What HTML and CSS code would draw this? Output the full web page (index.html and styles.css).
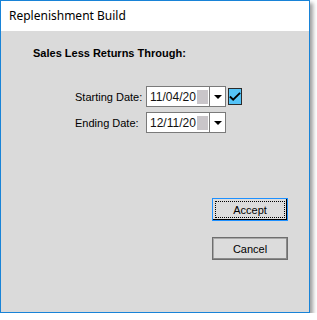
FILE: index.html
```html
<!DOCTYPE html>
<html lang="en">
<head>
  <meta charset="UTF-8" />
  <title>Replenishment Build</title>
  <link rel="stylesheet" href="styles.css">
</head>
<body>
  <div class="window">
    <div class="titlebar">Replenishment Build</div>

    <div class="content">
      <h1 class="section-title">Sales Less Returns Through:</h1>

      <div class="date-form">
        <label class="field-label">Starting Date:</label>
        <div class="field">
          <div class="date-picker">
            <span class="date-text">11/04/20</span>
            <span class="redacted"></span>
            <span class="drop-btn"><span class="arrow"></span></span>
          </div>
          <span class="check-box">
            <svg width="13" height="11" viewBox="0 0 13 11">
              <polyline points="1,5.5 4.5,9 12,1.5" fill="none" stroke="#000" stroke-width="2" />
            </svg>
          </span>
        </div>

        <label class="field-label">Ending Date:</label>
        <div class="field">
          <div class="date-picker">
            <span class="date-text">12/11/20</span>
            <span class="redacted"></span>
            <span class="drop-btn"><span class="arrow"></span></span>
          </div>
        </div>
      </div>

      <div class="actions">
        <button class="btn btn-default"><span class="focus-rect">Accept</span></button>
        <button class="btn">Cancel</button>
      </div>
    </div>
  </div>
</body>
</html>
```

FILE: styles.css
```css
body {
  margin: 0;
  background-color: #ffffff;
  font-family: "Liberation Sans", Arial, sans-serif;
  font-size: 11px;
  color: #000;
}

.window {
  width: 310px;
  height: 313px;
  box-sizing: border-box;
  border: 1px solid #1883d7;
  background-color: #dadada;
  box-shadow: 3px 3px 4px rgba(0, 0, 0, 0.38);
  display: flex;
  flex-direction: column;
}

.titlebar {
  height: 30px;
  line-height: 30px;
  background-color: #ffffff;
  padding-left: 8px;
  font-family: "Noto Sans", "Open Sans", sans-serif;
  font-size: 12px;
  color: #000;
}

.content {
  flex: 1;
  display: flex;
  flex-direction: column;
  padding: 16px 0 0 32px;
}

.section-title {
  margin: 0;
  font-size: 11px;
  line-height: 13px;
  font-weight: bold;
}

.date-form {
  display: grid;
  grid-template-columns: 71px auto;
  row-gap: 5px;
  margin-top: 26px;
  padding-left: 42px;
  align-items: center;
}

.field-label {
  font-size: 11px;
  color: #000;
}

.field {
  display: flex;
  align-items: center;
}

.date-picker {
  width: 80px;
  height: 21px;
  box-sizing: border-box;
  border: 1px solid #7a7a7a;
  background-color: #fff;
  display: flex;
  align-items: center;
}

.date-text {
  padding-left: 3px;
  font-size: 12px;
  color: #111;
}

.redacted {
  width: 11px;
  height: 14px;
  margin-left: 1px;
  background-color: #c9c5c9;
}

.drop-btn {
  margin-left: auto;
  width: 15px;
  height: 100%;
  border-left: 1px solid #7a7a7a;
  display: flex;
  align-items: center;
  justify-content: center;
}

.arrow {
  width: 0;
  height: 0;
  border-left: 4px solid transparent;
  border-right: 4px solid transparent;
  border-top: 4px solid #000;
}

.check-box {
  width: 14px;
  height: 17px;
  margin-left: 2px;
  box-sizing: border-box;
  border: 1px solid #2b2b2b;
  background-color: #54c3f7;
  display: flex;
  align-items: center;
  justify-content: center;
}

.actions {
  display: flex;
  flex-direction: column;
  align-items: flex-end;
  gap: 16px;
  margin-top: 65px;
  padding-right: 21px;
}

.btn {
  width: 76px;
  height: 23px;
  box-sizing: border-box;
  border: 1px solid #6e6e6e;
  box-shadow: inset -1px -1px 0 #8a8a8a, inset 1px 1px 0 #a8a8a8;
  background-color: #dcdcdc;
  font-family: "Liberation Sans", Arial, sans-serif;
  font-size: 11px;
  color: #000;
  padding: 0;
  display: flex;
  align-items: center;
  justify-content: center;
}

.btn-default {
  border-color: #1e90ff;
  box-shadow: inset -1px -1px 0 #000;
  padding: 2px;
}

.focus-rect {
  width: 100%;
  height: 100%;
  box-sizing: border-box;
  border: 1px dotted #000;
  display: flex;
  align-items: center;
  justify-content: center;
}
```
